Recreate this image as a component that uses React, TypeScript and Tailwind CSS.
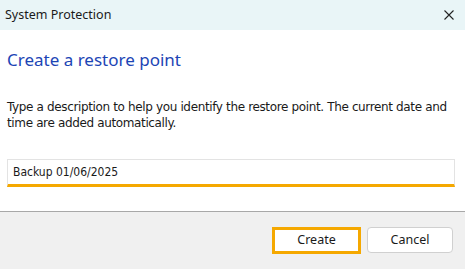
export default function App() {
  return (
    <div className="w-[465px] h-[269px] flex flex-col bg-white overflow-hidden font-['Noto_Sans',sans-serif] text-[#1a1a1a]">
      <div className="h-[30px] bg-[#e9f5f7] flex items-center justify-between pl-[5px] pr-[11px]">
        <span className="text-[12.5px]">System Protection</span>
        <svg width="10" height="10" viewBox="0 0 10 10" className="text-[#222]">
          <path d="M0.5 0.5 L9.5 9.5 M9.5 0.5 L0.5 9.5" stroke="currentColor" strokeWidth="1.1" />
        </svg>
      </div>

      <div className="flex-1 flex flex-col px-[7px]">
        <h1 className="mt-[18px] text-[17px] leading-[24px] text-[#1c45b5]">Create a restore point</h1>
        <p className="mt-[27px] text-[12px] leading-[16px] font-['DejaVu_Sans',sans-serif] tracking-[-0.36px]">
          Type a description to help you identify the restore point. The current date and time are added automatically.
        </p>
        <div className="mt-[28px] w-[448px] h-[28px] border border-[#e3e3e3] border-b-[3px] border-b-[#f5a800] flex items-center px-[5px]">
          <span className="text-[12px] font-['DejaVu_Sans_Condensed',sans-serif]">Backup 01/06/2025</span>
        </div>
      </div>

      <div className="h-[58px] bg-[#f0f0f0] border-t border-[#a8a8a8] flex items-start justify-end gap-[6px] pt-[15px] pr-[12px]">
        <button className="w-[89px] h-[27px] bg-white border-[3px] border-[#f5a800] text-[12.5px] flex items-center justify-center">
          Create
        </button>
        <button className="w-[86px] h-[26px] bg-white border border-[#d0d0d0] rounded-[4px] text-[12.5px] flex items-center justify-center">
          Cancel
        </button>
      </div>
    </div>
  );
}
